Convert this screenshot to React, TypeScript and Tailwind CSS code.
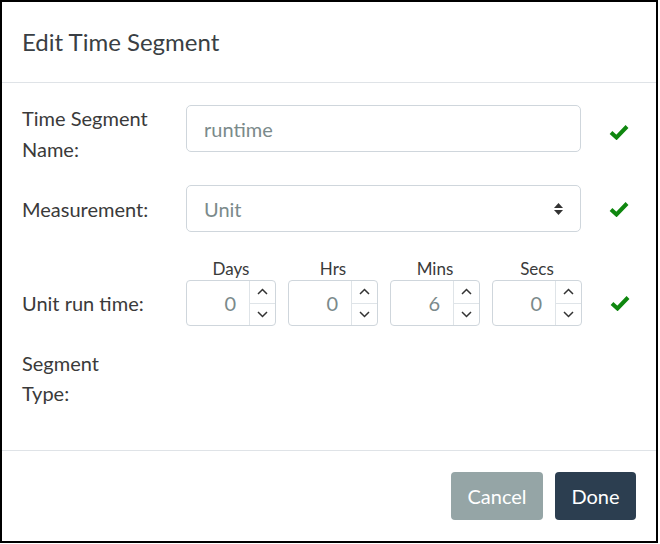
import React from "react";

function Check() {
  return (
    <div className="w-[22px] flex items-center justify-center">
      <svg width="20" height="16" viewBox="0 0 20 16">
        <path d="M2 8.5 L7.5 13.5 L18 2.5" stroke="#0f870f" strokeWidth="4" fill="none" strokeLinejoin="miter" />
      </svg>
    </div>
  );
}

function Chevron({ up }: { up?: boolean }) {
  return (
    <svg width="11" height="7" viewBox="0 0 11 7" fill="none">
      {up ? (
        <path d="M1 6 L5.5 1.5 L10 6" stroke="#333" strokeWidth="1.5" />
      ) : (
        <path d="M1 1 L5.5 5.5 L10 1" stroke="#333" strokeWidth="1.5" />
      )}
    </svg>
  );
}

function NumBox({ label, value }: { label: string; value: string }) {
  return (
    <div className="flex flex-col items-center w-[90px]">
      <div className="text-[17px] leading-[22px] text-[#3a3a3a]">{label}</div>
      <div className="w-[90px] h-[46px] border border-[#cfd6dc] rounded-[4px] flex overflow-hidden">
        <div className="flex-1 flex items-center justify-end pr-[13px] text-[20px] text-[#7b8a8b]">
          {value}
        </div>
        <div className="w-[26px] border-l border-[#dfe4e8] flex flex-col">
          <div className="flex-1 flex items-center justify-center border-b border-[#dfe4e8]">
            <Chevron up />
          </div>
          <div className="flex-1 flex items-center justify-center">
            <Chevron />
          </div>
        </div>
      </div>
    </div>
  );
}

export default function App() {
  return (
    <div
      className="w-[658px] h-[543px] border-2 border-black bg-white flex flex-col text-[#3a3a3a]"
      style={{ fontFamily: "Lato, 'Open Sans', sans-serif" }}
    >
      <div className="h-[80px] flex items-center px-[20px]">
        <div className="text-[24px] text-[#3a3f44]">Edit Time Segment</div>
      </div>
      <div className="h-[1px] bg-[#dfe3e7]" />
      <div className="h-[367px] px-[20px] pt-[22px]">
        <div className="flex items-start">
          <div className="w-[164px] text-[20px] leading-[31px] -mt-[2px]">
            Time Segment
            <br />
            Name:
          </div>
          <div className="w-[395px] h-[47px] border border-[#cfd6dc] rounded-[5px] flex items-center px-[17px] text-[20px] text-[#7b8a8b]">
            runtime
          </div>
          <div className="ml-[27px] h-[53px] flex items-center">
            <Check />
          </div>
        </div>
        <div className="flex items-center mt-[20px]">
          <div className="w-[164px] text-[20px] leading-[30px]">Measurement:</div>
          <div className="w-[395px] h-[47px] border border-[#cfd6dc] rounded-[5px] flex items-center justify-between pl-[17px] pr-[17px] text-[20px] text-[#7b8a8b]">
            <span>Unit</span>
            <svg width="9" height="12" viewBox="0 0 9 12">
              <path d="M4.5 0 L9 5 L0 5 Z" fill="#333" />
              <path d="M0 7 L9 7 L4.5 12 Z" fill="#333" />
            </svg>
          </div>
          <div className="ml-[27px] flex items-center">
            <Check />
          </div>
        </div>
        <div className="flex items-end mt-[26px]">
          <div className="w-[164px] h-[46px] flex items-center text-[20px]">Unit run time:</div>
          <div className="flex gap-[12px]">
            <NumBox label="Days" value="0" />
            <NumBox label="Hrs" value="0" />
            <NumBox label="Mins" value="6" />
            <NumBox label="Secs" value="0" />
          </div>
          <div className="ml-[27px] h-[46px] flex items-center">
            <Check />
          </div>
        </div>
        <div className="mt-[22px] text-[20px] leading-[30px]">
          Segment
          <br />
          Type:
        </div>
      </div>
      <div className="h-[1px] bg-[#dfe3e7]" />
      <div className="flex justify-end gap-[12px] pt-[21px] pr-[20px]">
        <div className="w-[92px] h-[48px] rounded-[4px] bg-[#95a5a6] text-white text-[20px] flex items-center justify-center">
          Cancel
        </div>
        <div className="w-[81px] h-[48px] rounded-[4px] bg-[#2c3e50] text-white text-[20px] flex items-center justify-center">
          Done
        </div>
      </div>
    </div>
  );
}
